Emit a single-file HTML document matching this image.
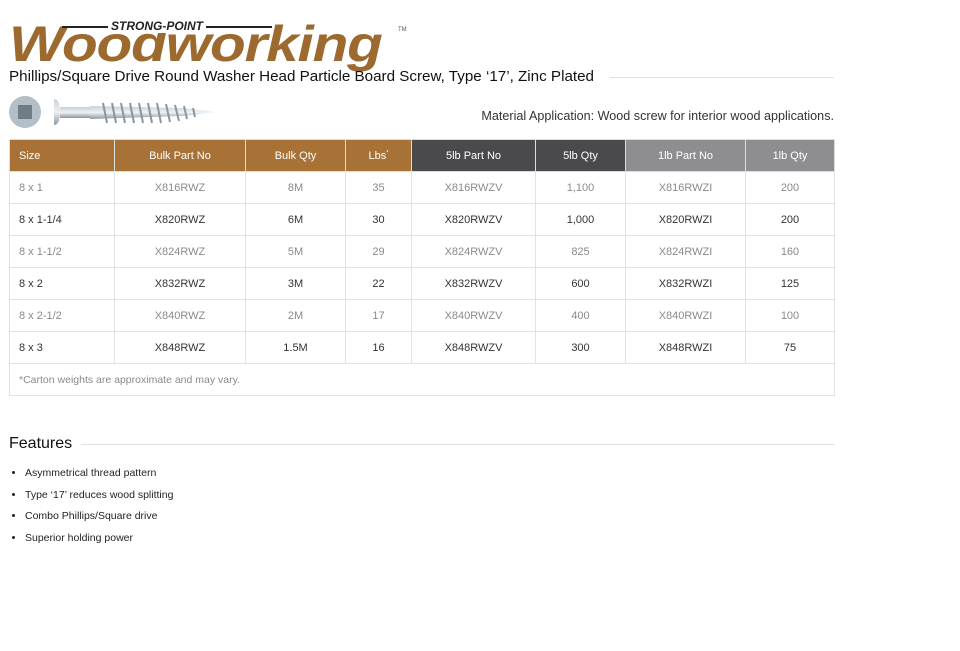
<!DOCTYPE html>
<html><head><style>
body{margin:0;background:#fff;font-family:"Liberation Sans",sans-serif;width:960px;height:651px;overflow:hidden;position:relative}
.abs{position:absolute}
table{position:absolute;left:9px;top:139px;border-collapse:collapse;width:825px;table-layout:fixed;font-size:11px}
td,th{border:1px solid #e2e2e2;height:31px;padding:0;text-align:center;font-weight:normal}
th{color:#fff;border-color:#ddd}
th.b{background:#a87236}th.d{background:#4a4a4c}th.g{background:#8e8e90}
td:first-child,th:first-child{text-align:left;padding-left:9px}
tr.o td{color:#8a8a8a}tr.e td{color:#333}
.hr{position:absolute;height:1px;background:#e0e0e0}
ul{position:absolute;left:9px;top:463px;margin:0;padding:0 0 0 16px;font-size:10.5px;color:#222}
li{height:21.7px;line-height:21.7px}
</style></head><body>
<div class="abs" style="left:9px;top:17px;font:italic 900 50px 'Liberation Sans',sans-serif;color:#9c6a2f;letter-spacing:-1px;line-height:54px;transform:scaleX(1.17);transform-origin:left">Woodworking</div>
<div class="abs" style="left:62px;top:26px;width:210px;height:2px;background:#222"></div>
<div class="abs" style="left:108px;top:19px;background:#fff;padding:0 3px;font:italic bold 12px 'Liberation Sans',sans-serif;color:#222">STRONG-POINT</div>
<div class="abs" style="left:398px;top:27px;font-size:6px;color:#555">TM</div>
<div class="abs" style="left:9px;top:68px;font-size:15.2px;color:#111">Phillips/Square Drive Round Washer Head Particle Board Screw, Type ‘17’, Zinc Plated</div>
<div class="hr" style="left:610px;top:77px;width:224px"></div>
<svg class="abs" style="left:8px;top:95px" width="215" height="36">
<defs><linearGradient id="s" x1="0" y1="0" x2="0" y2="1"><stop offset="0" stop-color="#c8d0d6"/><stop offset=".5" stop-color="#eef2f4"/><stop offset="1" stop-color="#8a96a0"/></linearGradient></defs>
<circle cx="17" cy="17" r="16" fill="#b4bec6"/><rect x="10" y="10" width="14" height="14" fill="#6f7c86"/>
<path d="M46 4 Q52 4 52 17 Q52 30 46 30 Z" fill="url(#s)"/>
<rect x="52" y="12" width="30" height="11" fill="url(#s)"/>
<path d="M82 11 L175 13 L208 17 L175 21 L82 24Z" fill="url(#s)"/>
<g stroke="#8a96a0" stroke-width="2">
<path d="M95 8 l4 20M104 8 l4 20M113 8 l4 20M122 8 l4 20M131 8 l4 20M140 8 l4 20M149 8 l4 20M158 9 l4 18M167 10 l4 16M176 11 l3 13M185 13 l2 9"/></g>
</svg>
<div class="abs" style="right:126px;top:109px;font-size:12.6px;color:#333">Material Application: Wood screw for interior wood applications.</div>
<table>
<colgroup><col style="width:105px"><col style="width:131px"><col style="width:100px"><col style="width:66px"><col style="width:124px"><col style="width:90px"><col style="width:120px"><col style="width:89px"></colgroup>
<tr><th class="b">Size</th><th class="b">Bulk Part No</th><th class="b">Bulk Qty</th><th class="b">Lbs<sup style="font-size:6px">*</sup></th><th class="d">5lb Part No</th><th class="d">5lb Qty</th><th class="g">1lb Part No</th><th class="g">1lb Qty</th></tr>
<tr class="o"><td>8 x 1</td><td>X816RWZ</td><td>8M</td><td>35</td><td>X816RWZV</td><td>1,100</td><td>X816RWZI</td><td>200</td></tr>
<tr class="e"><td>8 x 1-1/4</td><td>X820RWZ</td><td>6M</td><td>30</td><td>X820RWZV</td><td>1,000</td><td>X820RWZI</td><td>200</td></tr>
<tr class="o"><td>8 x 1-1/2</td><td>X824RWZ</td><td>5M</td><td>29</td><td>X824RWZV</td><td>825</td><td>X824RWZI</td><td>160</td></tr>
<tr class="e"><td>8 x 2</td><td>X832RWZ</td><td>3M</td><td>22</td><td>X832RWZV</td><td>600</td><td>X832RWZI</td><td>125</td></tr>
<tr class="o"><td>8 x 2-1/2</td><td>X840RWZ</td><td>2M</td><td>17</td><td>X840RWZV</td><td>400</td><td>X840RWZI</td><td>100</td></tr>
<tr class="e"><td>8 x 3</td><td>X848RWZ</td><td>1.5M</td><td>16</td><td>X848RWZV</td><td>300</td><td>X848RWZI</td><td>75</td></tr>
<tr class="o"><td colspan="8" style="font-size:10.5px">*Carton weights are approximate and may vary.</td></tr>
</table>
<div class="abs" style="left:9px;top:435px;font-size:16px;color:#111">Features</div>
<div class="hr" style="left:81px;top:444px;width:753px"></div>
<ul><li>Asymmetrical thread pattern</li><li>Type ‘17’ reduces wood splitting</li><li>Combo Phillips/Square drive</li><li>Superior holding power</li></ul>
</body></html>
